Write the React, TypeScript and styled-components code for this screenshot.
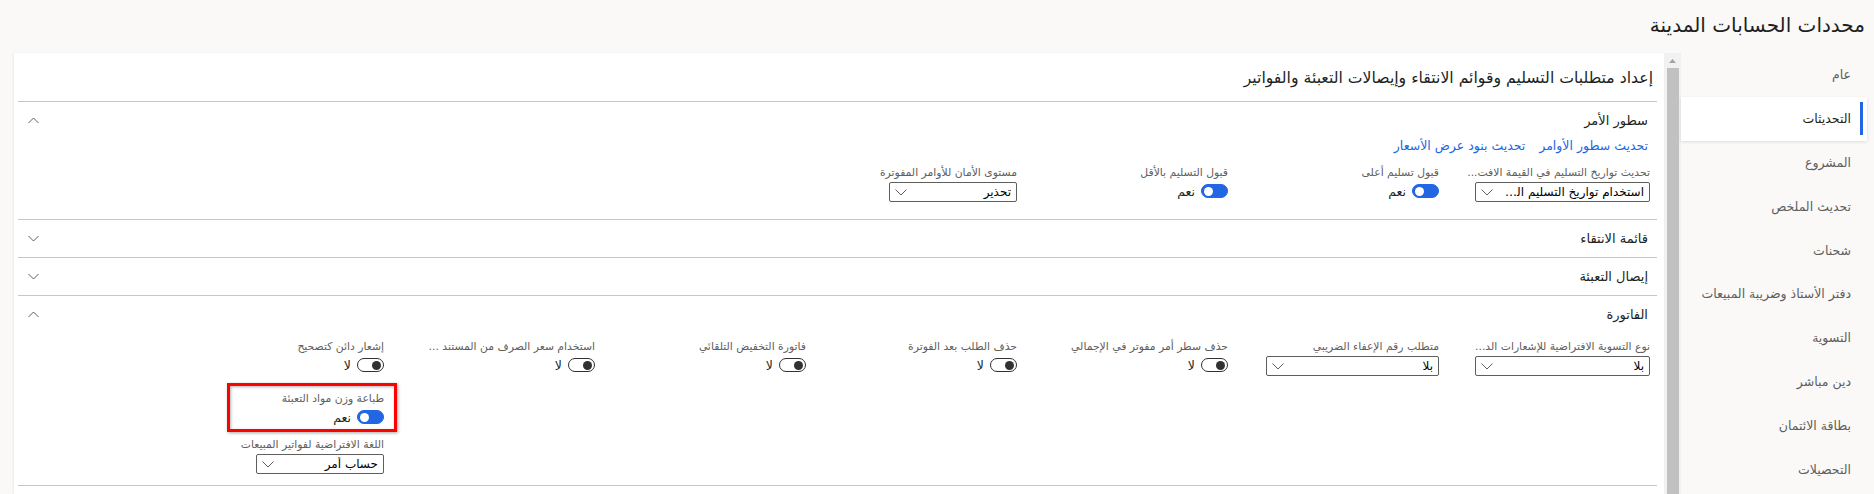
import React from "react";
import styled, { createGlobalStyle } from "styled-components";

const Global = createGlobalStyle`
  html, body { margin: 0; padding: 0; height: 100%; overflow: hidden; background: #faf9f8; }
  body { font-family: "DejaVu Sans", "Noto Sans", sans-serif; color: #201f1e; }
  #root { height: 100%; }
`;

const Page = styled.div`
  width: 1874px;
  height: 494px;
  display: flex;
  flex-direction: column;
  direction: rtl;
  overflow: hidden;
`;

const TitleBar = styled.h1`
  margin: 0;
  height: 53px;
  flex: none;
  display: flex;
  align-items: center;
  padding: 0 9px 4px 0;
  box-sizing: border-box;
  font-size: 20px;
  font-weight: normal;
  color: #201f1e;
`;

const Main = styled.div`
  flex: 1;
  min-height: 0;
  display: flex;
  flex-direction: row;
  padding: 0 7px 0 14px;
`;

const Nav = styled.nav`
  width: 186px;
  flex: none;
  display: flex;
  flex-direction: column;
`;

const NavItem = styled.div<{ $active?: boolean }>`
  position: relative;
  height: 43.8px;
  flex: none;
  display: flex;
  align-items: center;
  padding-right: 16px;
  font-size: 12.5px;
  color: ${(p) => (p.$active ? "#201f1e" : "#605e5c")};
  background: ${(p) => (p.$active ? "#ffffff" : "transparent")};
  box-shadow: ${(p) => (p.$active ? "0 1px 3px rgba(0,0,0,0.12)" : "none")};
  &::after {
    content: "";
    display: ${(p) => (p.$active ? "block" : "none")};
    position: absolute;
    right: 4px;
    top: 5px;
    bottom: 6px;
    width: 3px;
    background: #2266e3;
  }
`;

const ScrollTrack = styled.div`
  width: 17px;
  flex: none;
  background: #f1f1f1;
  display: flex;
  flex-direction: column;
  align-items: center;
`;

const ScrollArrow = styled.div`
  height: 15px;
  flex: none;
  display: flex;
  align-items: center;
  justify-content: center;
`;

const ScrollThumb = styled.div`
  width: 12px;
  flex: 1;
  background: #c1c1c1;
`;

const Card = styled.main`
  flex: 1;
  min-width: 0;
  background: #ffffff;
  padding: 0 7px 0 4px;
  box-shadow: -1px 0 2px rgba(0, 0, 0, 0.06);
`;

const Heading = styled.h2`
  margin: 0;
  height: 48px;
  display: flex;
  align-items: center;
  padding: 0 4px 0 0;
  font-size: 15.7px;
  font-weight: normal;
  color: #201f1e;
  border-bottom: 1px solid #c8c6c4;
`;

const Section = styled.section`
  border-bottom: 1px solid #c8c6c4;
`;

const SectionHeader = styled.div`
  height: 37px;
  display: flex;
  align-items: center;
  justify-content: space-between;
  padding: 0 9px 0 10px;
  font-size: 13px;
  color: #201f1e;
`;

const SectionBody = styled.div<{ $top: number; $bottom: number }>`
  padding: ${(p) => p.$top}px 7px ${(p) => p.$bottom}px 0;
`;

const LinksRow = styled.div`
  display: flex;
  gap: 14px;
  padding-right: 2px;
  height: 16px;
  align-items: center;
  margin-top: -2px;
  margin-bottom: 12px;
`;

const Link = styled.a`
  font-size: 12.5px;
  color: #2266e3;
  text-decoration: none;
  cursor: pointer;
`;

const Columns = styled.div`
  display: flex;
  flex-direction: row;
  align-items: flex-start;
`;

const Column = styled.div`
  width: 211px;
  flex: none;
  display: flex;
  flex-direction: column;
`;

const Field = styled.div<{ $highlight?: boolean; $mt?: number }>`
  position: relative;
  display: flex;
  flex-direction: column;
  align-items: flex-start;
  margin-top: ${(p) => p.$mt ?? 0}px;
  &::before {
    content: "";
    display: ${(p) => (p.$highlight ? "block" : "none")};
    position: absolute;
    right: -13px;
    left: 54px;
    top: -8px;
    bottom: -5px;
    border: 3px solid #ff0000;
    box-shadow: 1px 1px 3px rgba(0, 0, 0, 0.35), inset 1px 1px 3px rgba(0, 0, 0, 0.3);
    pointer-events: none;
  }
`;

const Label = styled.label`
  height: 16px;
  line-height: 16px;
  font-size: 10.8px;
  color: #605e5c;
  white-space: nowrap;
`;

const SelectBox = styled.div<{ $w: number }>`
  width: ${(p) => p.$w}px;
  height: 20px;
  margin-top: 1px;
  box-sizing: border-box;
  border: 1px solid #605e5c;
  border-radius: 2px;
  display: flex;
  align-items: center;
  gap: 5px;
  padding: 0 5px 0 5px;
  font-size: 12px;
  color: #000000;
`;

const SelectValue = styled.span`
  flex: 1;
  min-width: 0;
  overflow: hidden;
  white-space: nowrap;
  text-overflow: ellipsis;
  text-align: right;
`;

const ChevronSlot = styled.span`
  flex: none;
  display: flex;
  align-items: center;
`;

const ToggleRow = styled.div`
  height: 20px;
  display: flex;
  align-items: center;
  gap: 6px;
  font-size: 12.5px;
  color: #201f1e;
`;

const ToggleTrack = styled.span<{ $on: boolean }>`
  width: 27px;
  height: 14px;
  box-sizing: border-box;
  border-radius: 7px;
  border: 1px solid ${(p) => (p.$on ? "#2266e3" : "#323130")};
  background: ${(p) => (p.$on ? "#2266e3" : "#ffffff")};
  display: flex;
  align-items: center;
  justify-content: ${(p) => (p.$on ? "flex-end" : "flex-start")};
  padding: 0 2px;
`;

const ToggleKnob = styled.span<{ $on: boolean }>`
  width: 9px;
  height: 9px;
  border-radius: 50%;
  background: ${(p) => (p.$on ? "#ffffff" : "#323130")};
`;

const Chevron = ({ dir }: { dir: "up" | "down" }) => (
  <svg width="11" height="7" viewBox="0 0 11 7">
    <polyline
      points={dir === "up" ? "0.5,6 5.5,1 10.5,6" : "0.5,1 5.5,6 10.5,1"}
      fill="none"
      stroke="#605e5c"
      strokeWidth="1"
    />
  </svg>
);

const SmallChevron = () => (
  <svg width="12" height="7" viewBox="0 0 12 7">
    <polyline points="0.5,0.5 6,6 11.5,0.5" fill="none" stroke="#605e5c" strokeWidth="1" />
  </svg>
);

const Select = ({ label, value, w, mt }: { label: string; value: string; w: number; mt?: number }) => (
  <Field $mt={mt}>
    <Label>{label}</Label>
    <SelectBox $w={w}>
      <SelectValue>{value}</SelectValue>
      <ChevronSlot>
        <SmallChevron />
      </ChevronSlot>
    </SelectBox>
  </Field>
);

const Toggle = ({
  label,
  on,
  highlight,
  mt,
}: {
  label: string;
  on: boolean;
  highlight?: boolean;
  mt?: number;
}) => (
  <Field $highlight={highlight} $mt={mt}>
    <Label>{label}</Label>
    <ToggleRow>
      <ToggleTrack $on={on}>
        <ToggleKnob $on={on} />
      </ToggleTrack>
      <span>{on ? "نعم" : "لا"}</span>
    </ToggleRow>
  </Field>
);

const navItems = [
  "عام",
  "التحديثات",
  "المشروع",
  "تحديث الملخص",
  "شحنات",
  "دفتر الأستاذ وضريبة المبيعات",
  "التسوية",
  "دين مباشر",
  "بطاقة الائتمان",
  "التحصيلات",
];

export default function App() {
  return (
    <>
      <Global />
      <Page>
        <TitleBar>محددات الحسابات المدينة</TitleBar>
        <Main>
          <Nav>
            {navItems.map((n) => (
              <NavItem key={n} $active={n === "التحديثات"}>
                {n}
              </NavItem>
            ))}
          </Nav>
          <ScrollTrack>
            <ScrollArrow>
              <svg width="7" height="4" viewBox="0 0 7 4">
                <polygon points="0,4 3.5,0 7,4" fill="#a3a3a3" />
              </svg>
            </ScrollArrow>
            <ScrollThumb />
          </ScrollTrack>
          <Card>
            <Heading>إعداد متطلبات التسليم وقوائم الانتقاء وإيصالات التعبئة والفواتير</Heading>

            <Section>
              <SectionHeader>
                <span>سطور الأمر</span>
                <Chevron dir="up" />
              </SectionHeader>
              <SectionBody $top={0} $bottom={17}>
                <LinksRow>
                  <Link>تحديث سطور الأوامر</Link>
                  <Link>تحديث بنود عرض الأسعار</Link>
                </LinksRow>
                <Columns>
                  <Column>
                    <Select label="تحديث تواريخ التسليم في القيمة الافت..." value="استخدام تواريخ التسليم الحالية" w={175} />
                  </Column>
                  <Column>
                    <Toggle label="قبول تسليم أعلى" on />
                  </Column>
                  <Column>
                    <Toggle label="قبول التسليم بالأقل" on />
                  </Column>
                  <Column>
                    <Select label="مستوى الأمان للأوامر المفوترة" value="تحذير" w={128} />
                  </Column>
                </Columns>
              </SectionBody>
            </Section>

            <Section>
              <SectionHeader>
                <span>قائمة الانتقاء</span>
                <Chevron dir="down" />
              </SectionHeader>
            </Section>

            <Section>
              <SectionHeader>
                <span>إيصال التعبئة</span>
                <Chevron dir="down" />
              </SectionHeader>
            </Section>

            <Section>
              <SectionHeader>
                <span>الفاتورة</span>
                <Chevron dir="up" />
              </SectionHeader>
              <SectionBody $top={6} $bottom={11}>
                <Columns>
                  <Column>
                    <Select label="نوع التسوية الافتراضية للإشعارات الد..." value="بلا" w={175} />
                  </Column>
                  <Column>
                    <Select label="متطلب رقم الإعفاء الضريبي" value="بلا" w={173} />
                  </Column>
                  <Column>
                    <Toggle label="حذف سطر أمر مفوتر في الإجمالي" on={false} />
                  </Column>
                  <Column>
                    <Toggle label="حذف الطلب بعد الفوترة" on={false} />
                  </Column>
                  <Column>
                    <Toggle label="فاتورة التخفيض التلقائي" on={false} />
                  </Column>
                  <Column>
                    <Toggle label="استخدام سعر الصرف من المستند ..." on={false} />
                  </Column>
                  <Column>
                    <Toggle label="إشعار دائن كتصحيح" on={false} />
                    <Toggle label="طباعة وزن مواد التعبئة" on highlight mt={16} />
                    <Select label="اللغة الافتراضية لفواتير المبيعات" value="حساب أمر" w={128} mt={10} />
                  </Column>
                </Columns>
              </SectionBody>
            </Section>
          </Card>
        </Main>
      </Page>
    </>
  );
}
